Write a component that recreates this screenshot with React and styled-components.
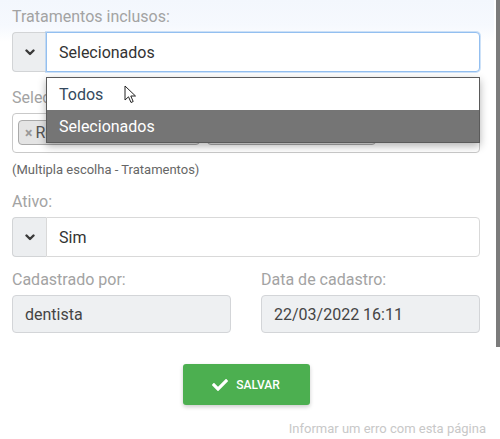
import styled, { createGlobalStyle } from "styled-components";
import { FaCheck } from "react-icons/fa";

const GlobalStyle = createGlobalStyle`
	html, body {
		margin: 0;
		padding: 0;
		background: #fff;
	}

	body {
		font-family: Roboto, "Liberation Sans", sans-serif;
		color: #333;
	}
`;

export default function App() {
	return (
		<>
			<GlobalStyle />
			<Page>
				<Content>
					<Group>
						<Label>Tratamentos inclusos:</Label>
						<SelectGroup>
							<Addon>
								<Chevron />
							</Addon>
							<SelectBox focused>Selecionados</SelectBox>
							<Dropdown>
								<Option>Todos</Option>
								<Option selected>Selecionados</Option>
								<Pointer />
							</Dropdown>
						</SelectGroup>
					</Group>

					<Group top={16}>
						<Label>Selecione os tratamentos:</Label>
						<MultiBox>
							<Tag width={182}>
								<TagRemove>×</TagRemove>Restauração
							</Tag>
							<Tag width={169}>
								<TagRemove>×</TagRemove>Limpeza
							</Tag>
						</MultiBox>
						<Help>(Multipla escolha - Tratamentos)</Help>
					</Group>

					<Group top={14}>
						<Label>Ativo:</Label>
						<SelectGroup>
							<Addon>
								<Chevron />
							</Addon>
							<SelectBox>Sim</SelectBox>
						</SelectGroup>
					</Group>

					<Row>
						<Group>
							<Label>Cadastrado por:</Label>
							<ReadOnly>dentista</ReadOnly>
						</Group>
						<Group>
							<Label>Data de cadastro:</Label>
							<ReadOnly>22/03/2022 16:11</ReadOnly>
						</Group>
					</Row>

					<Actions>
						<SaveButton>
							<FaCheck />
							SALVAR
						</SaveButton>
					</Actions>

					<Footer>Informar um erro com esta página</Footer>
				</Content>
				<Scrollbar>
					<Thumb />
				</Scrollbar>
			</Page>
		</>
	);
}

function Chevron() {
	return (
		<svg width="10" height="7" viewBox="0 0 10 7">
			<polyline
				points="1.5,1.5 5,5 8.5,1.5"
				fill="none"
				stroke="#3a3a3a"
				strokeWidth="2.4"
				strokeLinecap="round"
				strokeLinejoin="round"
			/>
		</svg>
	);
}

function Pointer() {
	return (
		<Cursor width="13" height="20" viewBox="0 0 13 20">
			<path
				d="M1 1 L1 15 L4.5 11.8 L7 17.5 L9.2 16.5 L6.8 11 L11.5 11 Z"
				fill="#fff"
				stroke="#222"
				strokeWidth="1"
				strokeLinejoin="round"
			/>
		</Cursor>
	);
}

const Page = styled.div`
	display: flex;
	width: 500px;
	height: 439px;
	overflow: hidden;
	background: linear-gradient(#f3f7fd 0, #f6f9fe 26px, #fff 42px);
`;

const Content = styled.div`
	flex: 1;
	display: flex;
	flex-direction: column;
	padding: 7px 14px 0 12px;
`;

const Scrollbar = styled.div`
	width: 6px;
	display: flex;
	justify-content: flex-end;
	background: #fff;
`;

const Thumb = styled.div`
	width: 4px;
	height: 347px;
	background: #7b7b7b;
`;

const Group = styled.div`
	display: flex;
	flex-direction: column;
	margin-top: ${(p) => p.top || 0}px;
	min-width: 0;
`;

const Label = styled.label`
	font-size: 16px;
	line-height: 20px;
	color: #a3a3a3;
	margin-bottom: 5px;
`;

const SelectGroup = styled.div`
	position: relative;
	display: flex;
	height: 40px;
`;

const Addon = styled.div`
	display: flex;
	align-items: center;
	justify-content: center;
	width: 33px;
	background: #eceef0;
	border: 1px solid #d2d4d6;
	border-right: none;
	border-radius: 4px 0 0 4px;
`;

const SelectBox = styled.div`
	flex: 1;
	display: flex;
	align-items: center;
	padding-left: 12px;
	font-size: 16px;
	color: #333;
	background: #fff;
	border: 1px solid ${(p) => (p.focused ? "#93bff0" : "#d9d9d9")};
	border-radius: 0 4px 4px 0;
	box-shadow: ${(p) => (p.focused ? "0 0 0 1px rgba(147, 191, 240, 0.45)" : "none")};
`;

const Dropdown = styled.ul`
	position: absolute;
	z-index: 2;
	top: 45px;
	left: 34px;
	right: 0;
	margin: 0;
	padding: 0;
	list-style: none;
	background: #fff;
	border: 1px solid #5a5a5a;
	box-shadow: 0 3px 8px rgba(0, 0, 0, 0.3);
`;

const Option = styled.li`
	height: 32px;
	display: flex;
	align-items: center;
	padding-left: 12px;
	font-size: 16px;
	color: ${(p) => (p.selected ? "#fff" : "#34495e")};
	background: ${(p) => (p.selected ? "#757575" : "#fff")};
`;

const Cursor = styled.svg`
	position: absolute;
	top: 7px;
	left: 77px;
`;

const MultiBox = styled.div`
	display: flex;
	gap: 7px;
	height: 40px;
	box-sizing: border-box;
	padding: 6px 5px 0;
	border: 1px solid #c9c9c9;
	border-radius: 4px;
`;

const Tag = styled.span`
	display: flex;
	align-items: center;
	width: ${(p) => p.width}px;
	height: 25px;
	box-sizing: border-box;
	padding-left: 6px;
	font-size: 16px;
	color: #555;
	background: #e4e4e4;
	border: 1px solid #aaa;
	border-radius: 4px;
	overflow: hidden;
	white-space: nowrap;
`;

const TagRemove = styled.span`
	font-size: 14px;
	font-weight: 700;
	color: #999;
	margin-right: 3px;
`;

const Help = styled.small`
	margin-top: 8px;
	font-size: 13px;
	line-height: 17px;
	color: #666;
`;

const Row = styled.div`
	display: grid;
	grid-template-columns: 1fr 1fr;
	column-gap: 30px;
	margin-top: 13px;
`;

const ReadOnly = styled.div`
	height: 38px;
	box-sizing: border-box;
	display: flex;
	align-items: center;
	padding-left: 12px;
	font-size: 16px;
	color: #444;
	background: #eef0f2;
	border: 1px solid #d3d5d8;
	border-radius: 4px;
`;

const Actions = styled.div`
	display: flex;
	justify-content: center;
	margin-top: 31px;
`;

const SaveButton = styled.button`
	display: flex;
	align-items: center;
	justify-content: center;
	gap: 8px;
	width: 127px;
	height: 41px;
	border: none;
	border-radius: 3px;
	background: #4caf50;
	color: #fff;
	font-family: Roboto, "Liberation Sans", sans-serif;
	font-size: 12px;
	font-weight: 500;
	box-shadow: 0 2px 4px rgba(0, 0, 0, 0.2);

	svg {
		font-size: 16px;
	}
`;

const Footer = styled.p`
	margin: 15px -6px 0 0;
	text-align: right;
	font-size: 13px;
	line-height: 17px;
	color: #c8c8c8;
`;
